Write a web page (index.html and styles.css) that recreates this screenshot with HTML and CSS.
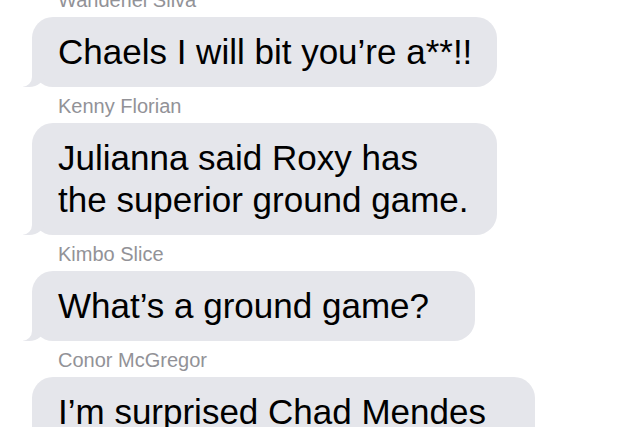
FILE: index.html
```html
<!DOCTYPE html>
<html lang="en">
<head>
    <meta charset="UTF-8" />
    <title>Group Chat</title>
    <link rel="stylesheet" href="styles.css">
</head>
<body>
    <div class="thread">
        <div class="message">
            <div class="sender">Wanderlei Silva</div>
            <div class="bubble bubble-a">Chaels I will bit you’re a**!!</div>
        </div>

        <div class="message">
            <div class="sender">Kenny Florian</div>
            <div class="bubble bubble-b">Julianna said Roxy has<br>the superior ground game.</div>
        </div>

        <div class="message">
            <div class="sender">Kimbo Slice</div>
            <div class="bubble bubble-c">What’s a ground game?</div>
        </div>

        <div class="message">
            <div class="sender">Conor McGregor</div>
            <div class="bubble bubble-d">I’m surprised Chad Mendes</div>
        </div>
    </div>
</body>
</html>
```

FILE: styles.css
```css
* {
    box-sizing: border-box;
    margin: 0;
    padding: 0;
}

html, body {
    height: 100%;
    overflow: hidden;
}

body {
    font-family: "Liberation Sans", Arial, sans-serif;
    background-color: #ffffff;
    color: #000000;
}

.thread {
    display: flex;
    flex-direction: column;
    gap: 7px;
    margin-top: -12px;
    padding-left: 32px;
}

.message {
    display: flex;
    flex-direction: column;
    gap: 5px;
}

.sender {
    padding-left: 26px;
    font-size: 20px;
    line-height: 24px;
    color: #929297;
}

.bubble {
    position: relative;
    padding: 14px 22px 14px 26px;
    font-size: 35px;
    line-height: 42px;
    white-space: nowrap;
    background-color: #e5e6eb;
    border-radius: 21px;
}

/* little tail at the bottom left */
.bubble::before {
    content: "";
    position: absolute;
    bottom: 0;
    left: -9px;
    width: 22px;
    height: 24px;
    background-color: #e5e6eb;
    border-bottom-right-radius: 16px 14px;
}

.bubble::after {
    content: "";
    position: absolute;
    bottom: 0;
    left: -28px;
    width: 28px;
    height: 26px;
    background-color: #ffffff;
    border-bottom-right-radius: 10px;
}

.bubble-a { width: 465px; }
.bubble-b { width: 465px; }
.bubble-c { width: 443px; }
.bubble-d { width: 503px; }
```
